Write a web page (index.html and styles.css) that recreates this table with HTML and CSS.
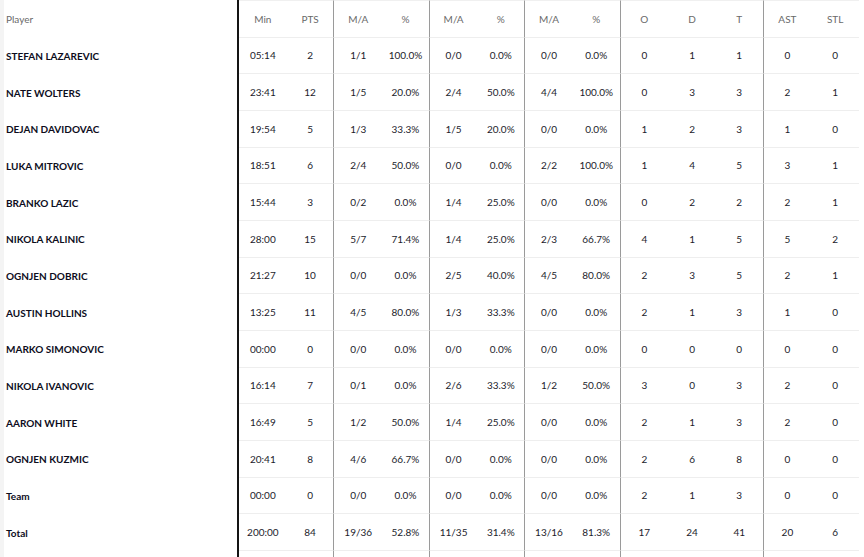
FILE: index.html
```html
<!DOCTYPE html>
<html lang="en">
<head>
<meta charset="utf-8">
<title>Box score</title>
<link rel="stylesheet" href="styles.css">
</head>
<body>
<div class="page">
  <div class="strip"></div>
  <table class="box">
    <colgroup>
      <col class="c-player">
      <col span="13" class="c-stat">
    </colgroup>
    <thead>
      <tr class="head">
        <th class="player">Player</th>
        <th>Min</th><th class="sep">PTS</th>
        <th>M/A</th><th class="sep">%</th>
        <th>M/A</th><th class="sep">%</th>
        <th>M/A</th><th class="sep">%</th>
        <th>O</th><th>D</th><th class="sep">T</th>
        <th>AST</th><th>STL</th>
      </tr>
    </thead>
    <tbody>
      <tr><td class="player">STEFAN LAZAREVIC</td><td>05:14</td><td class="sep">2</td><td>1/1</td><td class="sep">100.0%</td><td>0/0</td><td class="sep">0.0%</td><td>0/0</td><td class="sep">0.0%</td><td>0</td><td>1</td><td class="sep">1</td><td>0</td><td>0</td></tr>
      <tr><td class="player">NATE WOLTERS</td><td>23:41</td><td class="sep">12</td><td>1/5</td><td class="sep">20.0%</td><td>2/4</td><td class="sep">50.0%</td><td>4/4</td><td class="sep">100.0%</td><td>0</td><td>3</td><td class="sep">3</td><td>2</td><td>1</td></tr>
      <tr><td class="player">DEJAN DAVIDOVAC</td><td>19:54</td><td class="sep">5</td><td>1/3</td><td class="sep">33.3%</td><td>1/5</td><td class="sep">20.0%</td><td>0/0</td><td class="sep">0.0%</td><td>1</td><td>2</td><td class="sep">3</td><td>1</td><td>0</td></tr>
      <tr><td class="player">LUKA MITROVIC</td><td>18:51</td><td class="sep">6</td><td>2/4</td><td class="sep">50.0%</td><td>0/0</td><td class="sep">0.0%</td><td>2/2</td><td class="sep">100.0%</td><td>1</td><td>4</td><td class="sep">5</td><td>3</td><td>1</td></tr>
      <tr><td class="player">BRANKO LAZIC</td><td>15:44</td><td class="sep">3</td><td>0/2</td><td class="sep">0.0%</td><td>1/4</td><td class="sep">25.0%</td><td>0/0</td><td class="sep">0.0%</td><td>0</td><td>2</td><td class="sep">2</td><td>2</td><td>1</td></tr>
      <tr><td class="player">NIKOLA KALINIC</td><td>28:00</td><td class="sep">15</td><td>5/7</td><td class="sep">71.4%</td><td>1/4</td><td class="sep">25.0%</td><td>2/3</td><td class="sep">66.7%</td><td>4</td><td>1</td><td class="sep">5</td><td>5</td><td>2</td></tr>
      <tr><td class="player">OGNJEN DOBRIC</td><td>21:27</td><td class="sep">10</td><td>0/0</td><td class="sep">0.0%</td><td>2/5</td><td class="sep">40.0%</td><td>4/5</td><td class="sep">80.0%</td><td>2</td><td>3</td><td class="sep">5</td><td>2</td><td>1</td></tr>
      <tr><td class="player">AUSTIN HOLLINS</td><td>13:25</td><td class="sep">11</td><td>4/5</td><td class="sep">80.0%</td><td>1/3</td><td class="sep">33.3%</td><td>0/0</td><td class="sep">0.0%</td><td>2</td><td>1</td><td class="sep">3</td><td>1</td><td>0</td></tr>
      <tr><td class="player">MARKO SIMONOVIC</td><td>00:00</td><td class="sep">0</td><td>0/0</td><td class="sep">0.0%</td><td>0/0</td><td class="sep">0.0%</td><td>0/0</td><td class="sep">0.0%</td><td>0</td><td>0</td><td class="sep">0</td><td>0</td><td>0</td></tr>
      <tr><td class="player">NIKOLA IVANOVIC</td><td>16:14</td><td class="sep">7</td><td>0/1</td><td class="sep">0.0%</td><td>2/6</td><td class="sep">33.3%</td><td>1/2</td><td class="sep">50.0%</td><td>3</td><td>0</td><td class="sep">3</td><td>2</td><td>0</td></tr>
      <tr><td class="player">AARON WHITE</td><td>16:49</td><td class="sep">5</td><td>1/2</td><td class="sep">50.0%</td><td>1/4</td><td class="sep">25.0%</td><td>0/0</td><td class="sep">0.0%</td><td>2</td><td>1</td><td class="sep">3</td><td>2</td><td>0</td></tr>
      <tr><td class="player">OGNJEN KUZMIC</td><td>20:41</td><td class="sep">8</td><td>4/6</td><td class="sep">66.7%</td><td>0/0</td><td class="sep">0.0%</td><td>0/0</td><td class="sep">0.0%</td><td>2</td><td>6</td><td class="sep">8</td><td>0</td><td>0</td></tr>
      <tr><td class="player">Team</td><td>00:00</td><td class="sep">0</td><td>0/0</td><td class="sep">0.0%</td><td>0/0</td><td class="sep">0.0%</td><td>0/0</td><td class="sep">0.0%</td><td>2</td><td>1</td><td class="sep">3</td><td>0</td><td>0</td></tr>
      <tr><td class="player">Total</td><td>200:00</td><td class="sep">84</td><td>19/36</td><td class="sep">52.8%</td><td>11/35</td><td class="sep">31.4%</td><td>13/16</td><td class="sep">81.3%</td><td>17</td><td>24</td><td class="sep">41</td><td>20</td><td>6</td></tr>
      <tr class="filler"><td class="player"></td><td></td><td class="sep"></td><td></td><td class="sep"></td><td></td><td class="sep"></td><td></td><td class="sep"></td><td></td><td></td><td class="sep"></td><td></td><td></td></tr>
    </tbody>
  </table>
</div>
</body>
</html>
```

FILE: styles.css
```css
html, body {
  margin: 0;
  padding: 0;
  background: #ffffff;
  overflow: hidden;
}

.page {
  display: flex;
  align-items: flex-start;
  font-family: "Lato", "Noto Sans", sans-serif;
  font-size: 10px;
  color: #1c1c2b;
}

.strip {
  width: 4px;
  align-self: stretch;
  min-height: 557px;
  background: #f4f4f4;
  flex: none;
}

.box {
  border-collapse: separate;
  border-spacing: 0;
  table-layout: fixed;
  width: 855px;
  flex: none;
}

.c-player {
  width: 235px;
}

.c-stat {
  width: 47.7px;
}

.box th,
.box td {
  padding: 0;
  text-align: center;
  vertical-align: middle;
  border-bottom: 1px solid #eeeeee;
  white-space: nowrap;
  overflow: hidden;
}

.box tr {
  height: 36.68px;
}

.box .head {
  height: 37.5px;
}

.box th {
  font-weight: 400;
  color: #6a6a6a;
  border-top: 1px solid #f0f0f0;
}

.box .player {
  text-align: left;
  padding-left: 2px;
  border-bottom: none;
  border-top: none;
  border-right: 2px solid #141414;
  font-weight: 700;
  color: #0d0d1c;
}

.box th.player {
  font-weight: 400;
  color: #6a6a6a;
}

.box .sep {
  border-right: 1px solid #9a9a9a;
}

.box .filler {
  height: 30px;
}

.box .filler td {
  border-bottom: none;
}
```
